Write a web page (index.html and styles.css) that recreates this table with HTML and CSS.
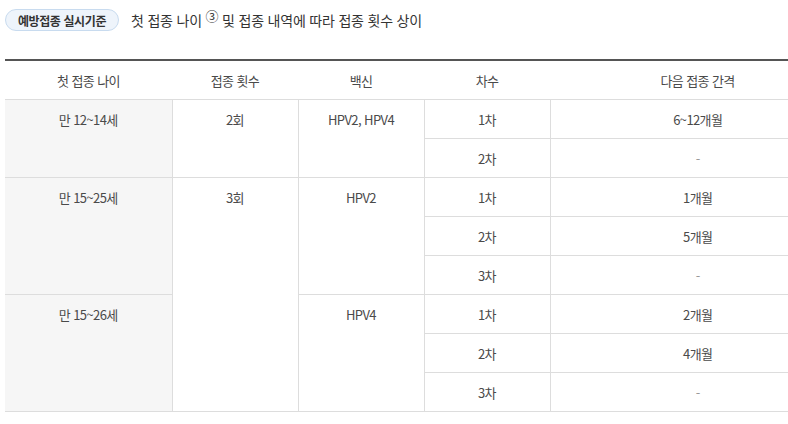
FILE: index.html
```html
<!DOCTYPE html>
<html lang="ko">
<head>
<meta charset="utf-8">
<link rel="stylesheet" href="styles.css">
</head>
<body>
<div class="page">
  <div class="intro">
    <span class="badge">예방접종 실시기준</span>
    <span class="desc">첫 접종 나이 <sup class="circ">③</sup> 및 접종 내역에 따라 접종 횟수 상이</span>
  </div>
  <div class="clip">
    <table class="sched">
      <colgroup>
        <col class="c1"><col class="c2"><col class="c2"><col class="c2"><col class="c5">
      </colgroup>
      <thead>
        <tr><th>첫 접종 나이</th><th>접종 횟수</th><th>백신</th><th>차수</th><th>다음 접종 간격</th></tr>
      </thead>
      <tbody>
        <tr><td rowspan="2" class="age">만 12~14세</td><td rowspan="2" class="top">2회</td><td rowspan="2" class="top">HPV2, HPV4</td><td>1차</td><td>6~12개월</td></tr>
        <tr><td>2차</td><td class="dash">-</td></tr>
        <tr><td rowspan="3" class="age">만 15~25세</td><td rowspan="6" class="top">3회</td><td rowspan="3" class="top">HPV2</td><td>1차</td><td>1개월</td></tr>
        <tr><td>2차</td><td>5개월</td></tr>
        <tr><td>3차</td><td class="dash">-</td></tr>
        <tr><td rowspan="3" class="age">만 15~26세</td><td rowspan="3" class="top">HPV4</td><td>1차</td><td>2개월</td></tr>
        <tr><td>2차</td><td>4개월</td></tr>
        <tr><td>3차</td><td class="dash">-</td></tr>
      </tbody>
    </table>
  </div>
</div>
</body>
</html>
```
FILE: styles.css
```css
html, body {
  margin: 0;
  padding: 0;
  overflow: hidden;
  background: #fff;
}
body {
  font-family: "Noto Sans CJK KR", "Noto Sans", sans-serif;
  color: #555;
}
.page {
  padding: 9px 0 0 5px;
}
.intro {
  display: flex;
  align-items: center;
  gap: 12px;
  height: 22px;
}
.badge {
  display: inline-flex;
  align-items: center;
  justify-content: center;
  box-sizing: border-box;
  width: 114px;
  height: 22px;
  border: 1px solid #c8dbef;
  border-radius: 11px;
  background: #eef4fb;
  color: #333;
  font-size: 12px;
  font-weight: 700;
  letter-spacing: -0.4px;
}
.desc {
  font-size: 14px;
  color: #333;
  letter-spacing: -0.2px;
}
.circ {
  font-size: 13px;
  vertical-align: 5px;
  line-height: 0;
}
.clip {
  margin-top: 28px;
  width: 783px;
  overflow: hidden;
}
.sched {
  width: 840px;
  border-collapse: collapse;
  table-layout: fixed;
  border-top: 2px solid #555;
  font-size: 13px;
  letter-spacing: -0.6px;
}
.c1 { width: 167px; }
.c2 { width: 126px; }
.c5 { width: 295px; }
.sched th {
  height: 38px;
  padding: 0;
  font-weight: 400;
  color: #4a4a4a;
  text-align: center;
  vertical-align: middle;
  border-bottom: 1px solid #ddd;
}
.sched td {
  height: 38px;
  padding: 0;
  text-align: center;
  vertical-align: middle;
  border: 1px solid #ddd;
  color: #4a4a4a;
}
.sched td:first-child { border-left: none; }
.sched tbody tr td:last-child { border-right: none; }
.sched td.top, .sched td.age {
  vertical-align: top;
  padding-top: 10px;
}
.sched td.age {
  background: #f6f6f6;
  border-left: none;
}
.sched td.dash { color: #999; }
```
